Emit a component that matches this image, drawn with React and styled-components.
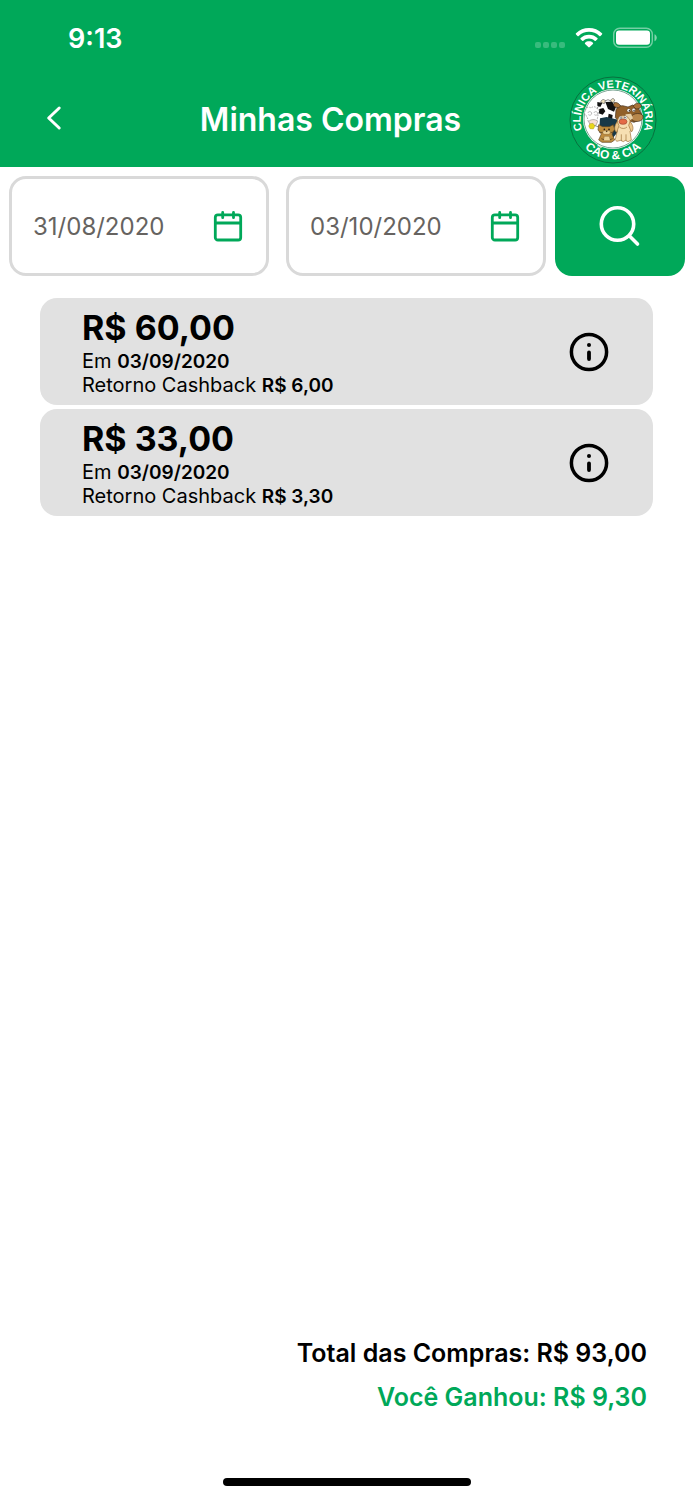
import React, { useState } from 'react';
import styled, { createGlobalStyle } from 'styled-components';

const purchases = [
  { id: 1, amount: 'R$ 60,00', date: '03/09/2020', cashback: 'R$ 6,00' },
  { id: 2, amount: 'R$ 33,00', date: '03/09/2020', cashback: 'R$ 3,30' },
];

const WifiIcon = () => (
  <svg width="28" height="22" viewBox="0 0 28 22" fill="#fff" aria-hidden="true">
    <path d="M14 1C9 1 4.500 2.900 1 6.200c-.4.4-.4.8 0 1.200l1.500 1.500c.4.4.8.4 1.200 0C6.500 6.200 10.100 4.800 14 4.800s7.500 1.400 10.300 4.100c.4.4.8.4 1.200 0L27 7.400c.4-.4.4-.8 0-1.200C23.500 2.900 19 1 14 1z" />
    <path d="M14 7.700c-3.200 0-6.200 1.200-8.400 3.300-.4.4-.4.8 0 1.200l1.600 1.500c.4.4.8.4 1.200 0 1.500-1.400 3.500-2.200 5.600-2.200s4.100.8 5.600 2.200c.4.4.8.4 1.200 0l1.600-1.500c.4-.4.4-.8 0-1.200-2.200-2.100-5.200-3.300-8.400-3.300z" />
    <path d="M14 14.300c-1.500 0-2.800.5-3.900 1.400-.4.4-.4.8 0 1.200l3.200 3.200c.4.4 1 .4 1.400 0l3.200-3.200c.4-.4.4-.8 0-1.200-1.100-.9-2.400-1.400-3.900-1.400z" />
  </svg>
);

const BatteryIcon = () => (
  <svg width="44" height="22" viewBox="0 0 44 22" fill="none" aria-hidden="true">
    <rect x="0.700" y="1.200" width="38.600" height="19" rx="6" stroke="#fff" strokeOpacity="0.450" strokeWidth="1.400" />
    <rect x="3" y="3.600" width="34" height="14.200" rx="3" fill="#fff" />
    <path d="M41.500 7.300v7c1.400-.6 2.300-2 2.300-3.500s-.9-2.900-2.300-3.500z" fill="#fff" fillOpacity="0.500" />
  </svg>
);

const BackIcon = () => (
  <svg width="16" height="26" viewBox="0 0 16 26" fill="none" stroke="#fff" strokeWidth="3" strokeLinecap="round" strokeLinejoin="round" aria-hidden="true">
    <path d="M13.200 3 2.700 13l10.500 10" />
  </svg>
);

const CalendarIcon = () => (
  <svg width="30" height="32" viewBox="0 0 30 32" fill="none" stroke="#00a859" strokeWidth="2.800" strokeLinecap="round" aria-hidden="true">
    <rect x="2.300" y="4.800" width="25.400" height="25.200" rx="2.600" />
    <path d="M2.500 13h25M9.700 2.500v5.200M20.500 2.500v5.200" />
  </svg>
);

const SearchIcon = () => (
  <svg width="42" height="42" viewBox="0 0 42 42" fill="none" stroke="#fff" strokeWidth="3.600" strokeLinecap="round" aria-hidden="true">
    <circle cx="18.500" cy="19" r="16.200" />
    <path d="m30.500 31 8 8" />
  </svg>
);

const InfoIcon = () => (
  <svg width="40" height="40" viewBox="0 0 40 40" fill="none" stroke="#000" strokeLinecap="round" aria-hidden="true">
    <circle cx="20" cy="20" r="17.600" strokeWidth="3.500" />
    <path d="M20 20.500v6.500" strokeWidth="3.800" />
    <circle cx="20" cy="13" r="2" fill="#000" stroke="none" />
  </svg>
);

const ClinicLogo = () => (
  <svg width="88" height="88" viewBox="27 19 264 264" role="img" aria-label="Clínica Veterinária Cão & Cia">
    <defs>
      <path id="topArc" d="M70 190A97 97 0 1 1 248 190" />
      <path id="bottomArc" d="M38 148A121 121 0 0 0 280 148" />
    </defs>
    <circle cx="159" cy="151" r="129" fill="#00a859" stroke="#08713f" strokeWidth="3" />
    <circle cx="159" cy="148" r="90" fill="#fff" />
    <circle cx="159" cy="148" r="87" fill="#fff" stroke="#35765a" strokeWidth="2" />
    <LogoText $size={33}>
      <textPath href="#topArc" startOffset="50%">CLÍNICA VETERINÁRIA</textPath>
    </LogoText>
    <LogoText $size={36}>
      <textPath href="#bottomArc" startOffset="50%">CÃO &amp; CIA</textPath>
    </LogoText>

    {/* cow */}
    <path d="M96 152l14-34 12-18 22-10 22 10 12 22-6 40-20 14-30-2-22-8z" fill="#fff" stroke="#555" strokeWidth="2" />
    <path d="M122 98c2-9 10-11 14-5l-3 9zm30-5c3-9 12-8 12 1l-8 7z" fill="#efe2c0" stroke="#333" strokeWidth="1.500" />
    <path d="M112 97l15 3-6 12-9-4zM136 97l20-1 12 16-6 14-18-8zM118 118l12-3 6 10-8 10-12-4zM146 132l12 4-2 14-12-6z" fill="#111" />

    {/* sheep */}
    <path d="M76 122c3-9 11-12 17-7 5-6 15-5 18 2 7 1 8 9 4 14l-4 22-12 8-14-5-4-16c-8-4-9-11-5-18z" fill="#fff" stroke="#888" strokeWidth="2" strokeDasharray="5 3" />
    <path d="M83 130c4-6 10-5 12 0s-6 9-10 5m16-5c4-6 10-5 12 0s-6 9-10 5" fill="none" stroke="#777" strokeWidth="1.500" />
    <path d="M86 156c4-7 20-9 27-1l-5 12-16 2z" fill="#f6ded5" stroke="#777" strokeWidth="1.500" />
    <path d="m90 162 9-1 6 8-5 9-10-1-4-8z" fill="#e8d61a" stroke="#8b7a22" />

    {/* moose */}
    <path d="M120 146l20-4 34 8 2 34-20 24-26-12-12-22z" fill="#173847" />
    <path d="M168 120c4-8 12-12 20-12l16 4 14-6 16 8 10 18-4 18-18 8-22-6-20 6-14-14z" fill="#916029" stroke="#3e2b16" strokeWidth="2" />
    <path d="M176 114c-14 0-18-8-14-13s14-2 20 8zm44-4c4-10 16-12 22-6s-2 14-14 14z" fill="#a8733a" stroke="#3e2b16" strokeWidth="2" />
    <path d="M214 140c6-10 30-12 35-1 2 11-9 18-22 16-9-1-16-7-13-15z" fill="#b8884c" stroke="#3e2b16" strokeWidth="2" />
    <path d="M197 134l16-2 6 14-12 8-14-6z" fill="#e6d0a6" />
    <circle cx="206" cy="122" r="5" fill="#fff" stroke="#333" />
    <circle cx="221" cy="121" r="5" fill="#fff" stroke="#333" />
    <circle cx="208" cy="123" r="2" fill="#111" />
    <circle cx="222" cy="122" r="2" fill="#111" />

    {/* cat */}
    <path d="m116 165 12 6h20l12-6 4 14-8 14 8 18-10 7h-28l-10-7 8-18-10-12z" fill="#bd8c3e" stroke="#5d4220" strokeWidth="2" />
    <path d="M127 186c8-5 18-5 25 0l-4 8h-17zm6 14h15l3 13h-21z" fill="#ead096" stroke="#6c4a20" />
    <path d="M117 187l11 2m24 0 11-3M124 207l8 3m18 0 8-3" stroke="#4a341b" strokeWidth="2" />
    <circle cx="133" cy="179" r="2.500" fill="#111" />
    <circle cx="147" cy="179" r="2.500" fill="#111" />
    <circle cx="140" cy="185" r="2.500" fill="#4a341b" />

    {/* dog */}
    <path d="M172 154c2-20 32-22 38-1l6 26-6 6 4 26-10 5-8-4-6 4-8-4-12 3-4-6 6-26-6-8z" fill="#f6dfb2" stroke="#9b7038" strokeWidth="2" />
    <path d="M172 156c-10 12-10 26-2 32l7-20zm38 0c10 10 12 24 4 31l-8-20z" fill="#edc88c" stroke="#9b7038" strokeWidth="2" />
    <circle cx="182" cy="145" r="5" fill="#fff" stroke="#555" />
    <circle cx="196" cy="144" r="5" fill="#fff" stroke="#555" />
    <circle cx="183" cy="145" r="2" fill="#111" />
    <circle cx="195" cy="144" r="2" fill="#111" />
    <ellipse cx="189" cy="156" rx="12" ry="8" fill="#e46b47" stroke="#a34a30" strokeWidth="2" />
    <path d="M178 172c7 6 17 6 23 0M184 194v20m14-20v20" fill="none" stroke="#9b7038" strokeWidth="2" />
  </svg>
);

const App = () => {
  const [startDate, setStartDate] = useState('31/08/2020');
  const [endDate, setEndDate] = useState('03/10/2020');

  return (
    <>
      <GlobalStyle />
      <Screen>
        <Header>
          <StatusBar>
            <Time>9:13</Time>
            <StatusIcons>
              <Signal>
                <i />
                <i />
                <i />
                <i />
              </Signal>
              <WifiIcon />
              <BatteryIcon />
            </StatusIcons>
          </StatusBar>
          <NavBar>
            <BackButton type="button" aria-label="Voltar">
              <BackIcon />
            </BackButton>
            <Title>Minhas Compras</Title>
            <ClinicLogo />
          </NavBar>
        </Header>

        <Filters onSubmit={(e) => e.preventDefault()}>
          <Dates>
            <DateField>
              <DateInput
                aria-label="Data inicial"
                value={startDate}
                onChange={(e) => setStartDate(e.target.value)}
              />
              <CalendarIcon />
            </DateField>
            <DateField>
              <DateInput
                aria-label="Data final"
                value={endDate}
                onChange={(e) => setEndDate(e.target.value)}
              />
              <CalendarIcon />
            </DateField>
          </Dates>
          <SearchButton type="submit" aria-label="Buscar">
            <SearchIcon />
          </SearchButton>
        </Filters>

        <List>
          {purchases.map((item) => (
            <Card key={item.id}>
              <div>
                <Amount>{item.amount}</Amount>
                <Detail>
                  Em <strong>{item.date}</strong>
                </Detail>
                <Detail>
                  Retorno Cashback <strong>{item.cashback}</strong>
                </Detail>
              </div>
              <InfoButton type="button" aria-label="Detalhes da compra">
                <InfoIcon />
              </InfoButton>
            </Card>
          ))}
        </List>

        <Totals>
          <Total>Total das Compras: R$ 93,00</Total>
          <Total $earned>Você Ganhou: R$ 9,30</Total>
        </Totals>
        <HomeIndicator />
      </Screen>
    </>
  );
};

const GlobalStyle = createGlobalStyle`
  * {
    box-sizing: border-box;
  }

  body {
    margin: 0;
    background: #fff;
    color: #000;
    font-family: Inter, "Liberation Sans", sans-serif;
  }

  button {
    padding: 0;
    border: 0;
    background: none;
    cursor: pointer;
  }

  svg {
    display: block;
    flex-shrink: 0;
  }
`;

const Screen = styled.div`
  display: flex;
  flex-direction: column;
  min-height: 100vh;
`;

const Header = styled.header`
  background: #00a859;
  color: #fff;
`;

const StatusBar = styled.div`
  display: flex;
  align-items: center;
  justify-content: space-between;
  height: 76px;
  padding: 0 36px 0 68px;
`;

const Time = styled.span`
  font-size: 27px;
  font-weight: 600;
`;

const StatusIcons = styled.div`
  display: flex;
  align-items: center;
  gap: 10px;
`;

const Signal = styled.span`
  display: flex;
  gap: 2px;
  padding-top: 14px;

  i {
    width: 6px;
    height: 6px;
    border-radius: 2px;
    background: rgba(255, 255, 255, 0.22);
  }
`;

const NavBar = styled.div`
  display: flex;
  align-items: center;
  justify-content: space-between;
  height: 91px;
  padding: 0 36px 4px 46px;
`;

const BackButton = styled.button`
  display: flex;
  align-items: center;
  width: 46px;
  height: 60px;
  padding-bottom: 4px;
`;

const Title = styled.h1`
  margin: 0;
  font-size: 32px;
  font-weight: 600;
  line-height: 40px;
`;

const LogoText = styled.text`
  fill: #fff;
  font-family: "Liberation Sans", sans-serif;
  font-size: ${(props) => props.$size}px;
  font-weight: 700;
  text-anchor: middle;
`;

const Filters = styled.form`
  display: flex;
  gap: 9px;
  padding: 9px 8px 0 9px;
`;

const Dates = styled.div`
  display: flex;
  flex: 1;
  gap: 17px;
  min-width: 0;
`;

const DateField = styled.label`
  display: flex;
  flex: 1;
  align-items: center;
  min-width: 0;
  height: 100px;
  padding: 0 23px 0 21px;
  border: 3px solid #d9d9d9;
  border-radius: 17px;
`;

const DateInput = styled.input`
  flex: 1;
  min-width: 0;
  padding: 0;
  border: 0;
  outline: 0;
  background: transparent;
  color: #666360;
  font-family: inherit;
  font-size: 24px;
`;

const SearchButton = styled.button`
  display: flex;
  flex: 0 0 130px;
  align-items: center;
  justify-content: center;
  border-radius: 17px;
  background: #00a859;
`;

const List = styled.main`
  display: flex;
  flex: 1;
  flex-direction: column;
  gap: 4px;
  padding: 22px 40px;
`;

const Card = styled.article`
  display: flex;
  align-items: center;
  justify-content: space-between;
  padding: 9px 44px 8px 42px;
  border-radius: 17px;
  background: #e1e1e1;
`;

const Amount = styled.h2`
  margin: 0;
  font-size: 34px;
  font-weight: 700;
  line-height: 42px;
`;

const Detail = styled.p`
  margin: 0;
  font-size: 20px;
  line-height: 24px;

  strong {
    font-size: 19px;
    font-weight: 600;
    line-height: 1;
  }
`;

const InfoButton = styled.button`
  display: flex;
`;

const Totals = styled.footer`
  padding: 0 46px 59px;
  text-align: right;
`;

const Total = styled.p`
  margin: 0;
  color: ${(props) => (props.$earned ? '#00a859' : '#000')};
  font-size: 25px;
  font-weight: 600;
  line-height: 44px;
`;

const HomeIndicator = styled.div`
  align-self: center;
  width: 248px;
  height: 8px;
  margin-bottom: 14px;
  border-radius: 4px;
  background: #000;
`;

export default App;
